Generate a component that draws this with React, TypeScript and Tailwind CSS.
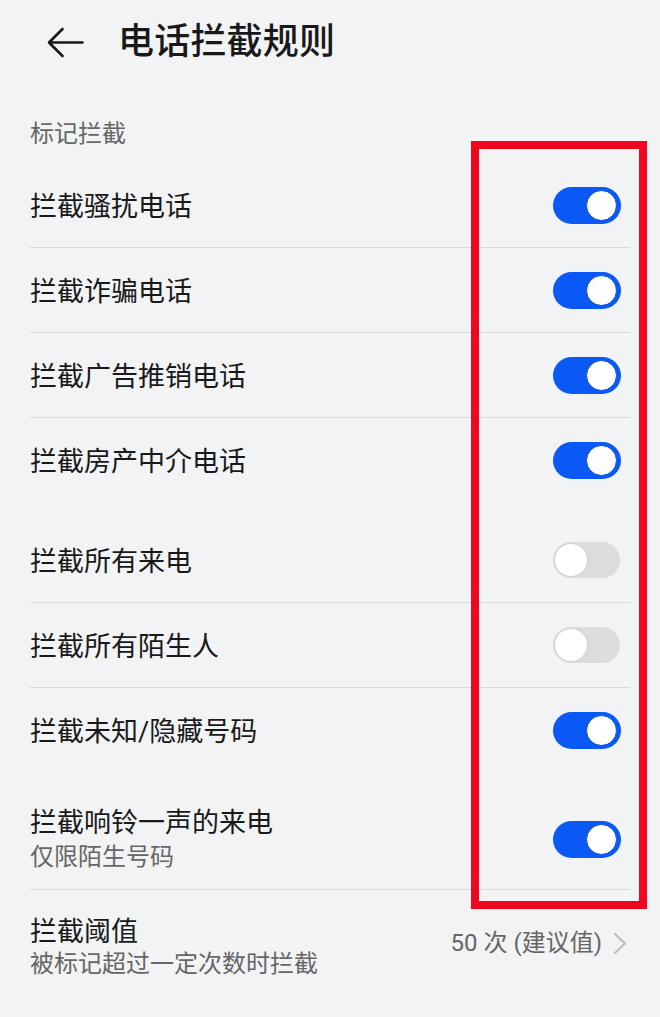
import React from "react";

type Row = {
  label: string;
  sub?: string;
  on: boolean;
};

const groupOne: Row[] = [
  { label: "拦截骚扰电话", on: true },
  { label: "拦截诈骗电话", on: true },
  { label: "拦截广告推销电话", on: true },
  { label: "拦截房产中介电话", on: true },
];

const groupTwo: Row[] = [
  { label: "拦截所有来电", on: false },
  { label: "拦截所有陌生人", on: false },
  { label: "拦截未知/隐藏号码", on: true },
];

const font = { fontFamily: '"Roboto", "Noto Sans CJK SC", sans-serif' };

export default function App() {
  return (
    <div className="relative min-h-screen w-[660px] bg-[#f1f3f5] text-[#191919]" style={font}>
      {/* header */}
      <div className="flex h-[84px] items-center">
        <svg width="37" height="31" viewBox="0 0 37 31" className="ml-[47px]" fill="none">
          <path d="M2 15.5H35.5M15.5 2L2 15.5L15.5 29" stroke="#191919" strokeWidth="2.6" strokeLinecap="round" strokeLinejoin="round" />
        </svg>
        <h1 className="ml-[34px] text-[36px] font-medium leading-none tracking-[0.2px]">电话拦截规则</h1>
      </div>

      <div className="px-[30px]">
        <p className="mt-[35px] h-[30px] text-[24px] leading-[30px] text-[#666666]">标记拦截</p>
        <div className="mt-[14px]">
          <Group rows={groupOne} />
        </div>

        <div className="mt-[16px]">
          <Group rows={groupTwo} />
        </div>

        <div className="mt-[15px]">
          <div className="flex items-center justify-between pt-[18px] pb-[16px]">
            <div>
              <p className="text-[27px] leading-[36px]">拦截响铃一声的来电</p>
              <p className="text-[24px] leading-[32px] text-[#666666]">仅限陌生号码</p>
            </div>
            <Toggle on />
          </div>
          <div className="h-px bg-[#d8d9db]" />
          <div className="flex items-center justify-between pt-[24px] pb-[24px]">
            <div>
              <p className="text-[27px] leading-[36px]">拦截阈值</p>
              <p className="text-[24px] leading-[28px] text-[#666666]">被标记超过一定次数时拦截</p>
            </div>
            <div className="mr-[3px] mt-[-6px] flex items-center gap-[11px]">
              <span className="text-[24px] text-[#666666]">50 次 (建议值)</span>
              <svg width="14" height="23" viewBox="0 0 14 23" fill="none">
                <path d="M2 2L12 11.5L2 21" stroke="#bdbdbd" strokeWidth="2.2" strokeLinecap="round" strokeLinejoin="round" />
              </svg>
            </div>
          </div>
        </div>
      </div>

      {/* red annotation frame */}
      <div className="pointer-events-none absolute left-[471px] top-[141px] h-[768px] w-[176px] border-[8px] border-[#f0061f]" />
    </div>
  );
}

function Group({ rows }: { rows: Row[] }) {
  return (
    <div>
      {rows.map((row, i) => (
        <div key={row.label}>
          <div className="flex h-[84px] items-center justify-between">
            <span className="mt-[4px] text-[27px] leading-[36px]">{row.label}</span>
            <Toggle on={row.on} />
          </div>
          {i < rows.length - 1 && <div className="h-px bg-[#d8d9db]" />}
        </div>
      ))}
    </div>
  );
}

function Toggle({ on }: { on: boolean }) {
  if (on) {
    return (
      <div className="mr-[9px] flex h-[37px] w-[68px] items-center justify-end rounded-full bg-[#0a59f7] pr-[4px]">
        <div className="h-[31px] w-[31px] rounded-full border border-[#0b4fd6] bg-white" />
      </div>
    );
  }
  return (
    <div className="mr-[10px] flex h-[36px] w-[67px] items-center rounded-full bg-[#dcdcdc] pl-[1px]">
      <div className="h-[34px] w-[34px] rounded-full border border-[#d0d0d0] bg-white" />
    </div>
  );
}
